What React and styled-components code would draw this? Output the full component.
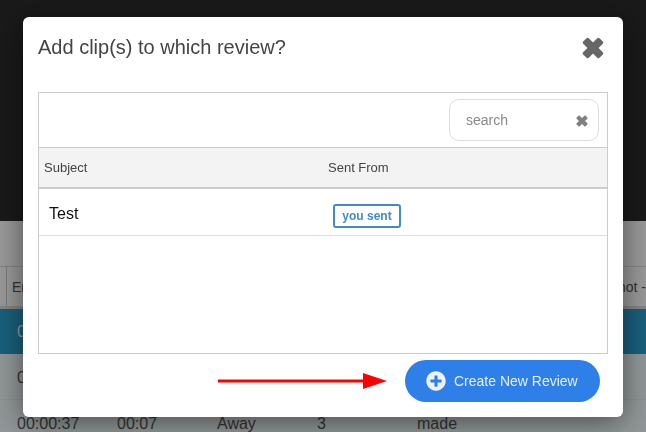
import React from "react";
import styled, { createGlobalStyle } from "styled-components";
import { FaPlusCircle } from "react-icons/fa";

const rows = [
    { time: "00:00:12", length: "00:05", team: "Home", period: "3", result: "made", active: true },
    { time: "00:00:24", length: "00:06", team: "Home", period: "3", result: "made" },
    { time: "00:00:37", length: "00:07", team: "Away", period: "3", result: "made" },
];

const Cross = ({ className }) => (
    <svg className={className} viewBox="0 0 21 21" fill="currentColor">
        <rect x="-0.5" y="6.75" width="22" height="7.5" rx="1.5" transform="rotate(45 10.5 10.5)" />
        <rect x="-0.5" y="6.75" width="22" height="7.5" rx="1.5" transform="rotate(-45 10.5 10.5)" />
    </svg>
);

const App = () => {
    return (
        <>
            <GlobalStyle />
            <Page>
                <TopBar />
                <Toolbar />
                <TableHead>
                    <HeadCell>End Time</HeadCell>
                    <LastHeadCell>Screenshot -</LastHeadCell>
                </TableHead>
                {rows.map((row) => (
                    <ClipRow key={row.time} $active={row.active}>
                        <span>{row.time}</span>
                        <span>{row.length}</span>
                        <span>{row.team}</span>
                        <span>{row.period}</span>
                        <span>{row.result}</span>
                    </ClipRow>
                ))}
            </Page>

            <Backdrop>
                <Modal>
                    <ModalHeader>
                        <Title>Add clip(s) to which review?</Title>
                        <CloseIcon />
                    </ModalHeader>

                    <Panel>
                        <SearchRow>
                            <SearchBox>
                                <SearchInput type="text" placeholder="search" />
                                <ClearIcon />
                            </SearchBox>
                        </SearchRow>
                        <PanelHead>
                            <span>Subject</span>
                            <span>Sent From</span>
                        </PanelHead>
                        <ReviewRow>
                            <Subject>Test</Subject>
                            <div>
                                <Badge>you sent</Badge>
                            </div>
                        </ReviewRow>
                    </Panel>

                    <Footer>
                        <svg width="169" height="16" viewBox="0 0 169 16">
                            <rect x="0" y="6.5" width="146" height="3" fill="#ff0000" />
                            <polygon points="145,0 169,8 145,16" fill="#ff0000" />
                        </svg>
                        <CreateButton>
                            <FaPlusCircle />
                            Create New Review
                        </CreateButton>
                    </Footer>
                </Modal>
            </Backdrop>
        </>
    );
};

const GlobalStyle = createGlobalStyle`
    html, body {
        margin: 0;
        height: 100%;
        overflow: hidden;
        background: #fff;
        font-family: "Liberation Sans", Arial, sans-serif;
    }
`;

const Page = styled.div`
    width: 646px;
    height: 432px;
    overflow: hidden;
`;

const TopBar = styled.div`
    height: 221px;
    background-color: #2b2b2b;
`;

const Toolbar = styled.div`
    height: 45px;
    background-color: #fff;
`;

const TableHead = styled.div`
    display: flex;
    justify-content: space-between;
    box-sizing: border-box;
    height: 43px;
    padding-left: 6px;
    border-top: 1px solid #ddd;
    border-bottom: 3px solid #ddd;
    background-color: #fff;
    color: #555;
    font-size: 14px;
`;

const HeadCell = styled.div`
    display: flex;
    align-items: center;
    padding-left: 5px;
    border-left: 1px solid #ccc;
`;

const LastHeadCell = styled(HeadCell)`
    border-left: none;
    padding-left: 0;
    white-space: nowrap;
`;

const ClipRow = styled.div`
    display: grid;
    grid-template-columns: repeat(5, 100px);
    align-items: center;
    box-sizing: border-box;
    height: ${(props) => (props.$active ? "45px" : "46px")};
    padding: 2px 0 0 17px;
    border-bottom: 1px solid ${(props) => (props.$active ? "#2b9fd0" : "#eee")};
    background-color: ${(props) => (props.$active ? "#2b9fd0" : "#f2fbfd")};
    color: ${(props) => (props.$active ? "#fff" : "#555")};
    font-size: 16px;
`;

const Backdrop = styled.div`
    position: fixed;
    inset: 0;
    display: flex;
    justify-content: center;
    align-items: flex-start;
    padding-top: 17px;
    background-color: rgba(0, 0, 0, 0.4);
`;

const Modal = styled.div`
    display: flex;
    flex-direction: column;
    box-sizing: border-box;
    width: 600px;
    height: 400px;
    padding: 0 15px;
    border-radius: 6px;
    background-color: #fff;
    box-shadow: 0 5px 30px rgba(0, 0, 0, 0.5);
`;

const ModalHeader = styled.div`
    display: flex;
    justify-content: space-between;
    align-items: flex-start;
    height: 75px;
    flex-shrink: 0;
`;

const Title = styled.h4`
    margin: 0;
    padding-top: 18px;
    color: #444;
    font-size: 20px;
    font-weight: 400;
    line-height: 24px;
`;

const CloseIcon = styled(Cross)`
    width: 22px;
    height: 22px;
    margin-top: 20px;
    margin-right: 4px;
    color: #666;
`;

const Panel = styled.div`
    box-sizing: border-box;
    height: 262px;
    border: 1px solid #ccc;
    flex-shrink: 0;
`;

const SearchRow = styled.div`
    display: flex;
    justify-content: flex-end;
    box-sizing: border-box;
    height: 55px;
    padding: 6px 8px 0 0;
    border-bottom: 1px solid #ccc;
`;

const SearchBox = styled.div`
    display: flex;
    align-items: center;
    box-sizing: border-box;
    width: 150px;
    height: 42px;
    padding: 0 10px 0 16px;
    border: 1px solid #ddd;
    border-radius: 10px;
`;

const SearchInput = styled.input`
    flex: 1;
    min-width: 0;
    padding: 0;
    border: none;
    outline: none;
    color: #555;
    font-family: inherit;
    font-size: 14px;

    &::placeholder {
        color: #888;
        opacity: 1;
    }
`;

const ClearIcon = styled(Cross)`
    width: 12px;
    height: 12px;
    margin-top: 1px;
    color: #808080;
`;

const PanelHead = styled.div`
    display: grid;
    grid-template-columns: 284px 1fr;
    align-items: center;
    box-sizing: border-box;
    height: 41px;
    padding-left: 5px;
    border-bottom: 2px solid #ccc;
    background-color: #f3f3f3;
    color: #444;
    font-size: 13px;
`;

const ReviewRow = styled.div`
    display: grid;
    grid-template-columns: 284px 1fr;
    align-items: center;
    box-sizing: border-box;
    height: 47px;
    padding: 4px 0 0 10px;
    border-bottom: 1px solid #ddd;
`;

const Subject = styled.span`
    color: #111;
    font-size: 16px;
`;

const Badge = styled.span`
    display: inline-flex;
    align-items: center;
    justify-content: center;
    box-sizing: border-box;
    width: 68px;
    height: 24px;
    margin-top: 3px;
    border: 2px solid #428bca;
    border-radius: 3px;
    color: #428bca;
    font-size: 12px;
    font-weight: 700;
`;

const Footer = styled.div`
    display: flex;
    justify-content: flex-end;
    align-items: center;
    gap: 18px;
    margin-top: 6px;
    margin-right: 8px;
`;

const CreateButton = styled.button`
    display: flex;
    align-items: center;
    gap: 8px;
    box-sizing: border-box;
    width: 195px;
    height: 42px;
    padding: 0 0 0 21px;
    border: none;
    border-radius: 21px;
    background-color: #2f7fe8;
    color: #e6effb;
    font-family: inherit;
    font-size: 14px;

    svg {
        width: 20px;
        height: 20px;
        color: #eef2f8;
    }
`;

export default App;
